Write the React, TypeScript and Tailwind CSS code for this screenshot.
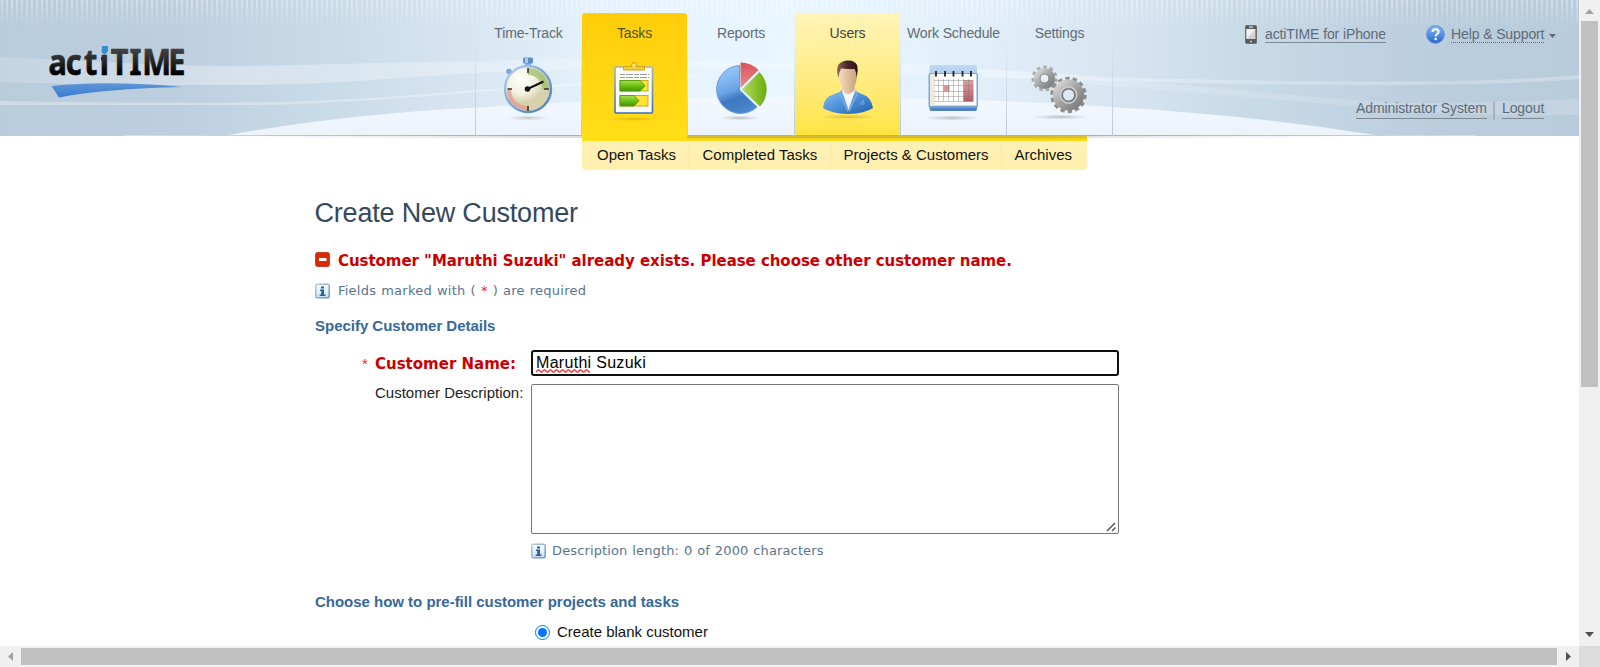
import React from "react";

const tabs = ["Time-Track", "Tasks", "Reports", "Users", "Work Schedule", "Settings"];

function HeaderBackdrop() {
  return (
    <svg className="absolute inset-0" width="1579" height="140" viewBox="0 0 1579 140">
      <defs>
        <linearGradient id="sky">
          <stop offset="0" stopColor="#b9ccdc" />
          <stop offset="0.11" stopColor="#bdcfdf" />
          <stop offset="0.15" stopColor="#c2d3e3" />
          <stop offset="0.22" stopColor="#cbdce9" />
          <stop offset="0.29" stopColor="#d7e5f1" />
          <stop offset="0.38" stopColor="#e5f2fc" />
          <stop offset="0.5" stopColor="#eaf6ff" />
          <stop offset="0.62" stopColor="#e2effa" />
          <stop offset="0.71" stopColor="#d7e5f1" />
          <stop offset="0.78" stopColor="#cadbe8" />
          <stop offset="0.85" stopColor="#c2d3e3" />
          <stop offset="0.92" stopColor="#bacddc" />
          <stop offset="1" stopColor="#b9ccdc" />
        </linearGradient>
        <linearGradient id="fade" x1="0" y1="0" x2="0" y2="1">
          <stop offset="0" stopColor="#fff" stopOpacity="0.34" />
          <stop offset="1" stopColor="#fff" stopOpacity="0" />
        </linearGradient>
        <pattern id="stripes" width="5" height="27" patternUnits="userSpaceOnUse">
          <rect x="1" width="2" height="27" fill="url(#fade)" />
        </pattern>
        <linearGradient id="band">
          <stop offset="0" stopColor="#fff" stopOpacity="0.16" />
          <stop offset="0.4" stopColor="#fff" stopOpacity="0.34" />
          <stop offset="1" stopColor="#fff" stopOpacity="0.2" />
        </linearGradient>
        <linearGradient id="hill" x1="0" y1="0" x2="0" y2="1">
          <stop offset="0" stopColor="#f2f8ff" />
          <stop offset="1" stopColor="#edf3fb" />
        </linearGradient>
        <linearGradient id="line">
          <stop offset="0" stopColor="#dfe8f0" stopOpacity="0.6" />
          <stop offset="0.12" stopColor="#b5c6d5" />
          <stop offset="0.3" stopColor="#9fb1c2" />
          <stop offset="0.7" stopColor="#9fb1c2" />
          <stop offset="0.88" stopColor="#b5c6d5" />
          <stop offset="1" stopColor="#dfe8f0" stopOpacity="0.6" />
        </linearGradient>
        <linearGradient id="shade">
          <stop offset="0" stopColor="#999" stopOpacity="0" />
          <stop offset="0.3" stopColor="#998f8a" stopOpacity="0.3" />
          <stop offset="0.7" stopColor="#998f8a" stopOpacity="0.3" />
          <stop offset="1" stopColor="#999" stopOpacity="0" />
        </linearGradient>
      </defs>
      <rect width="1579" height="136" fill="url(#sky)" />
      <rect width="1579" height="27" fill="url(#stripes)" />
      <path d="M0 57C90 61 170 66 230 66C320 65 400 62 475 61L600 58L600 68L475 73C390 78 320 86 210 85C130 85 60 84 0 82Z" fill="url(#band)" />
      <path d="M0 101Q250 105 330 100Q400 97 475 90Q600 82 700 74L700 76Q600 84 475 92Q380 101 270 105L0 105Z" fill="#fff" opacity="0.3" />
      <path d="M690 62Q900 62 1110 77Q1440 87 1579 75L1579 79Q1440 90 1110 81Q900 76 690 66Z" fill="#fff" opacity="0.25" />
      <path d="M850 58Q1000 70 1110 79Q1300 96 1400 103Q1480 103 1579 99L1579 115Q1480 117 1400 110Q1200 93 1110 86Q950 74 850 58Z" fill="#fff" opacity="0.15" />
      <path d="M228 135Q345 114 480 107.500Q640 97 790 97Q990 98 1110 107Q1250 115 1375 135Z" fill="url(#hill)" />
      <rect x="125" y="135" width="1350" height="1" fill="url(#line)" />
      <rect x="230" y="136" width="1130" height="2" fill="url(#shade)" />
    </svg>
  );
}

function Logo() {
  return (
    <svg className="overflow-visible" width="150" height="64" viewBox="44 40 150 64">
      <defs>
        <linearGradient id="ink" x1="0" y1="0" x2="0" y2="1">
          <stop offset="0" stopColor="#454545" />
          <stop offset="0.5" stopColor="#222" />
          <stop offset="0.9" stopColor="#000" />
        </linearGradient>
        <pattern id="logoInk" patternUnits="userSpaceOnUse" x="0" y="0" width="300" height="120">
          <rect y="48" width="300" height="29" fill="url(#ink)" />
          <rect x="116" y="40" width="12.500" height="13.500" fill="#2f8fcf" />
        </pattern>
        <linearGradient id="swoosh" x1="0" y1="0" x2="0" y2="1">
          <stop offset="0" stopColor="#5f96d4" />
          <stop offset="1" stopColor="#377bd2" />
        </linearGradient>
      </defs>
      <text
        transform="scale(.85 1)"
        x="57 77.500 98.800 117.500 130.200 152.500 167.500 198"
        y="75"
        fill="url(#logoInk)"
        stroke="url(#logoInk)"
        strokeWidth="0.700"
        className="font-['Noto_Sans',sans-serif] text-[36px] font-bold"
      >
        actiTIME
      </text>
      <rect x="102" y="46" width="6" height="5.500" fill="#2f8fcf" />
      <path d="M101 57h4v3.500h-4Z" fill="#2c2c2c" />
      <path d="M51.500 86Q108 80 183 87Q105 88.500 59 97.500Q56 93 51.500 86Z" fill="url(#swoosh)" />
    </svg>
  );
}

function Stopwatch() {
  return (
    <svg width="60" height="66" viewBox="0 0 60 66">
      <defs>
        <radialGradient id="dial" cx="0.35" cy="0.3">
          <stop offset="0" stopColor="#fff" />
          <stop offset="0.6" stopColor="#f3f2e2" />
          <stop offset="1" stopColor="#d5d2ac" />
        </radialGradient>
        <linearGradient id="rim" x1="0" x2="1" y1="0" y2="1">
          <stop offset="0" stopColor="#b9d2f0" />
          <stop offset="1" stopColor="#4478c4" />
        </linearGradient>
        <radialGradient id="ground"><stop offset="0" stopColor="#555" stopOpacity=".3" /><stop offset="1" stopColor="#777" stopOpacity="0" /></radialGradient>
      </defs>
      <ellipse cx="29" cy="62" rx="21" ry="2.500" fill="url(#ground)" />
      <rect x="26" y="4" width="6" height="7" fill="#7faee3" />
      <rect x="24" y="1.500" width="10" height="6" rx="1.500" fill="#5d8cc9" />
      <rect x="26" y="2" width="3" height="5" fill="#a9c9ee" />
      <circle cx="10" cy="15.500" r="2.800" fill="#7aa5dc" />
      <circle cx="29" cy="33" r="23" fill="url(#dial)" stroke="url(#rim)" strokeWidth="2.400" />
      <path d="M29 12A21 21 0 0 1 50 33L43 33A14 14 0 0 0 29 19Z" fill="#9cbf6a" opacity=".75" />
      <path d="M8 34A21 21 0 0 0 29 54.500L29 50A17 16 0 0 1 12 34Z" fill="#e39a8b" opacity=".75" />
      <path d="M29 12v5M29 50v5M8.500 33h4.500M45 33h5" stroke="#333" strokeWidth="1.600" />
      <path d="M28.500 33L44.500 25.500" stroke="#111" strokeWidth="2" />
      <circle cx="28.500" cy="33" r="2.800" fill="#151515" />
    </svg>
  );
}

function Clipboard() {
  return (
    <svg width="60" height="66" viewBox="0 0 60 66">
      <defs>
        <linearGradient id="leaf" x1="0" x2="0" y1="0" y2="1"><stop offset="0" stopColor="#a9df46" /><stop offset=".5" stopColor="#6fc119" /><stop offset="1" stopColor="#3f9000" /></linearGradient>
        <linearGradient id="paper" x1="0" x2="0" y1="0" y2="1"><stop offset="0" stopColor="#a9b7a5" /><stop offset="1" stopColor="#3770b8" /></linearGradient>
        <radialGradient id="groundY"><stop offset="0" stopColor="#b38600" stopOpacity=".4" /><stop offset="1" stopColor="#b38600" stopOpacity="0" /></radialGradient>
      </defs>
      <ellipse cx="29" cy="63" rx="26" ry="2" fill="url(#groundY)" />
      <rect x="10" y="11" width="37.500" height="46" rx="1" fill="#fbfbf8" stroke="url(#paper)" strokeWidth="1.600" />
      <path d="M18.500 10.500h8V8.500q0-2 2.500-2t2.500 2v2h8v3.500h-21Z" fill="#f5cf3d" stroke="#cda51b" />
      <circle cx="29" cy="9.500" r="1.200" fill="#fff2a4" />
      <path d="M15 18.500h29M15 21.500h29" stroke="#999" strokeDasharray="5 1 7 1" />
      <rect x="15" y="24.500" width="28" height="10.500" fill="#ffe233" stroke="#c5ad20" />
      <rect x="15" y="39.500" width="28" height="10.500" fill="#ffe233" stroke="#c5ad20" />
      <path d="M15 24.500h20l5 5.250l-5 5.250h-20Z" fill="url(#leaf)" stroke="#5e9e14" />
      <path d="M15 39.500h14l5 5.250l-5 5.250h-14Z" fill="url(#leaf)" stroke="#5e9e14" />
    </svg>
  );
}

function Pie() {
  return (
    <svg width="60" height="66" viewBox="0 0 60 66">
      <defs>
        <linearGradient id="blue" x1=".3" x2=".6" y1="0" y2="1"><stop offset="0" stopColor="#9bcaf9" /><stop offset=".5" stopColor="#6aa4e6" /><stop offset=".68" stopColor="#3d77bf" /><stop offset="1" stopColor="#4a88d0" /></linearGradient>
        <linearGradient id="red" x1="0" x2="0" y1="0" y2="1"><stop offset="0" stopColor="#d9525a" /><stop offset="1" stopColor="#e68d8e" /></linearGradient>
        <linearGradient id="green" x1="0" x2="1"><stop offset="0" stopColor="#b3dc5d" /><stop offset="1" stopColor="#69ac0d" /></linearGradient>
        <radialGradient id="groundP"><stop offset="0" stopColor="#555" stopOpacity=".35" /><stop offset="1" stopColor="#777" stopOpacity="0" /></radialGradient>
      </defs>
      <ellipse cx="29" cy="62" rx="20" ry="2.500" fill="url(#groundP)" />
      <path d="M28.500 34V9.500A24 24 0 1 0 46 51Z" fill="url(#blue)" stroke="#6898d6" />
      <path d="M29.500 32V6.500A25 25 0 0 1 47.500 14Z" fill="url(#red)" />
      <path d="M31 33.500L48.500 16A25 25 0 0 1 49 50.500Z" fill="url(#green)" />
    </svg>
  );
}

function Person() {
  return (
    <svg width="60" height="66" viewBox="0 0 60 66">
      <defs>
        <linearGradient id="coat" x1="0" x2="1" y1="0" y2="1"><stop offset="0" stopColor="#8cc0f0" /><stop offset=".5" stopColor="#4c90d8" /><stop offset="1" stopColor="#235da5" /></linearGradient>
        <linearGradient id="skin"><stop offset="0" stopColor="#f3dcc0" /><stop offset="1" stopColor="#caa079" /></linearGradient>
        <linearGradient id="hair"><stop offset="0" stopColor="#8a675e" /><stop offset=".5" stopColor="#4c2326" /><stop offset="1" stopColor="#2e1214" /></linearGradient>
      </defs>
      <ellipse cx="30" cy="61" rx="29" ry="2.500" fill="url(#groundY)" />
      <path d="M5 52Q6 41 15 38.500L23 35.500Q30 32 38 35.500L45 38.500Q53 41 55 52Q47 57.500 30 58Q13 57.500 5 52Z" fill="url(#coat)" />
      <path d="M23.500 34L30.500 54L37.500 34Z" fill="#f2f5f9" />
      <path d="M23.500 34.500L22.500 39L30 55M37.500 34.500L38.500 39L31 55" fill="none" stroke="#71a9e4" strokeWidth="1.800" />
      <path d="M21.500 12Q20 25 24 30V34Q30 42 36.500 34V30Q40 24 38.500 12Q30 4 21.500 12Z" fill="url(#skin)" />
      <path d="M20.500 22Q17.500 12 21 8Q25 4 31 4.500Q36.500 4.500 39 9Q40.500 14 38.500 22Q38.500 16 36.500 13Q30 13 23 12.500Q21 16 20.500 22Z" fill="url(#hair)" />
      <path d="M42 48l3-4l1 4Z" fill="none" stroke="#75aae2" />
    </svg>
  );
}

function Schedule() {
  return (
    <svg width="60" height="66" viewBox="0 0 60 66">
      <defs>
        <linearGradient id="calTop" x1="0" x2="0" y1="0" y2="1"><stop offset="0" stopColor="#c0d8f4" /><stop offset=".6" stopColor="#8fb6e5" /><stop offset="1" stopColor="#4c7fc0" /></linearGradient>
        <linearGradient id="week" x1="0" x2="0" y1="0" y2="1"><stop offset="0" stopColor="#dda2a0" /><stop offset="1" stopColor="#b95a62" /></linearGradient>
      </defs>
      <ellipse cx="28" cy="62" rx="29" ry="2.500" fill="url(#groundP)" />
      <rect x="5.500" y="9" width="47.500" height="46" rx="2" fill="url(#calTop)" />
      <rect x="4.500" y="17" width="49.500" height="34.500" rx="1.500" fill="#7fa7d8" />
      <rect x="6" y="18" width="46.500" height="31.500" fill="#fdfdfd" />
      <rect x="6" y="18" width="5" height="31.500" fill="#eeebdd" />
      <rect x="19.500" y="29.500" width="6" height="6" fill="#d89394" />
      <rect x="39.500" y="24" width="10" height="21.500" fill="url(#week)" />
      <path d="M10 24.500h39M10 29.500h39M10 35.500h39M10 40.500h39M10 45.500h39M14.500 23v22M19.500 23v22M24.500 23v22M29.500 23v22M34.500 23v22M39.500 23v22M44.500 23v22" stroke="#777" strokeOpacity=".5" strokeWidth=".8" />
      <path d="M12 15v5.500M21 15v5.500M29.500 15v5.500M38.500 15v5.500M47 15v5.500" stroke="#1d2229" strokeWidth="1.800" />
    </svg>
  );
}

function Gears() {
  return (
    <svg width="60" height="66" viewBox="0 0 60 66">
      <defs>
        <linearGradient id="steel" x1="0" x2="1" y1="0" y2="1"><stop offset="0" stopColor="#d5d5d5" /><stop offset=".5" stopColor="#a2a2a2" /><stop offset="1" stopColor="#7c7c7c" /></linearGradient>
      </defs>
      <ellipse cx="30" cy="61" rx="29" ry="2.500" fill="url(#groundP)" />
      <circle cx="14.500" cy="22.500" r="11.500" fill="none" stroke="#a9a9a9" strokeWidth="3" strokeDasharray="3.600 2.968" />
      <circle cx="14.500" cy="22.500" r="7.400" fill="none" stroke="url(#steel)" strokeWidth="6.400" />
      <circle cx="14.500" cy="22.500" r="4.500" fill="none" stroke="#888" strokeWidth="1" />
      <circle cx="38.500" cy="39" r="16.200" fill="none" stroke="#8c8c8c" strokeWidth="4" strokeDasharray="4.200 3.070" />
      <circle cx="38.500" cy="39" r="11.200" fill="none" stroke="url(#steel)" strokeWidth="9" />
      <circle cx="38.500" cy="39" r="8.200" fill="none" stroke="#cdcdcd" strokeWidth="1.500" />
      <circle cx="38.500" cy="39" r="6.300" fill="none" stroke="#777" strokeWidth="1.500" />
    </svg>
  );
}

const icons = [Stopwatch, Clipboard, Pie, Person, Schedule, Gears];

const tabStyles = [
  "w-[105px] h-[136px] pt-[24px] text-[#5f6b76]",
  "w-[105px] mt-[13px] h-[128px] pt-[11px] rounded-t-[3px] bg-linear-to-b from-[#ffcd0a] to-[#ffde18] text-[#4e5327]",
  "w-[106px] h-[136px] pt-[24px] text-[#5f6b76]",
  "w-[105px] mt-[13px] h-[122px] pt-[11px] bg-linear-to-b from-[#fff4b8] to-[#ffe43f] text-[#3f4446]",
  "w-[105px] h-[136px] pt-[24px] text-[#5f6b76]",
  "w-[105px] h-[136px] pt-[24px] text-[#5f6b76]",
];

function Tab({ label, index }: { label: string; index: number }) {
  const Icon = icons[index];
  return (
    <div className={`relative flex shrink-0 flex-col items-center ${tabStyles[index]}`}>
      <span className="h-[18px] text-[14px] leading-[18px] tracking-[-0.13px] whitespace-nowrap">{label}</span>
      <div className="mt-[14px]">
        <Icon />
      </div>
    </div>
  );
}

function Separator() {
  return <div className="h-[136px] w-px shrink-0 bg-linear-to-b from-transparent from-25% to-[#b9c9e4]" />;
}

function Header() {
  return (
    <header className="relative flex h-[136px] w-[1579px] shrink-0">
      <HeaderBackdrop />
      <div className="relative w-[475px] shrink-0 pt-[40px] pl-[44px]">
        <Logo />
      </div>
      <nav className="relative flex shrink-0">
        <Separator />
        {tabs.map((t, i) => (
          <React.Fragment key={t}>
            <Tab label={t} index={i} />
            <Separator />
          </React.Fragment>
        ))}
      </nav>
      <div className="relative flex flex-1 flex-col items-end pr-[35px] text-[14px] leading-[16px] tracking-[-0.11px] text-[#5f6b76]">
        <div className="-mr-[12px] flex pt-[25px]">
          <svg width="12" height="19" viewBox="0 0 12 19">
            <rect x=".5" y=".5" width="11" height="18" rx="1" fill="#5a5a5a" stroke="#707070" />
            <rect x="1.500" y="4" width="9" height="10" fill="#d2d2d2" />
            <path d="M1.500 4h9L1.500 14Z" fill="#f0f0f0" />
            <path d="M4 2h4M5 16.500h2" stroke="#ccc" strokeWidth="1.500" />
          </svg>
          <span className="mt-px ml-[8px] h-[17px] w-[121px] border-b border-[#7c8791] whitespace-nowrap">actiTIME for iPhone</span>
          <svg className="ml-[40px]" width="19" height="19" viewBox="0 0 19 19">
            <defs><linearGradient id="help" x1="0" x2="0" y1="0" y2="1"><stop offset="0" stopColor="#86b7f8" /><stop offset="1" stopColor="#2867d4" /></linearGradient></defs>
            <circle cx="9.500" cy="9.500" r="8.800" fill="url(#help)" stroke="#5d8bd2" />
            <path d="M6.500 7Q6.500 4.200 9.600 4.200Q12.600 4.200 12.600 6.700Q12.600 8.300 10.900 9.200Q9.700 9.900 9.700 11.500" fill="none" stroke="#fff" strokeWidth="2" />
            <circle cx="9.700" cy="14" r="1.300" fill="#fff" />
          </svg>
          <span className="mt-px ml-[6px] h-[17px] w-[93px] border-b border-dotted border-[#5f6b76] whitespace-nowrap">Help &amp; Support</span>
          <svg className="mt-[9px] ml-[5px]" width="7" height="4"><path d="M0 0h7L3.500 4Z" fill="#5f6b76" /></svg>
        </div>
        <div className="mt-[56px] flex">
          <span className="h-[19px] w-[131px] border-b border-[#7c8791] whitespace-nowrap">Administrator System</span>
          <span className="mt-[2px] ml-[6px] h-[18px] w-[2px] bg-[#aeb1b9]" />
          <span className="ml-[7px] h-[19px] w-[42px] border-b border-[#7c8791] whitespace-nowrap">Logout</span>
        </div>
      </div>
    </header>
  );
}

function SubMenu() {
  return (
    <div className="ml-[582px] h-[34px] w-[505px] shrink-0 overflow-hidden rounded-b-[4px]">
      <div className="flex h-[5px]">
        <div className="w-[105px] bg-[#ffde18]" />
        <div className="flex-1 bg-linear-to-b from-[#ecca0d] to-[#fbdb1b]" />
      </div>
      <div className="flex h-[29px] bg-linear-to-b from-[#fff1b6] to-[#fff0ae] text-[15px] leading-[28px] whitespace-nowrap text-[#111]">
        <span className="w-[108px] border-r border-[#f8e8a8] pl-[15px]">Open Tasks</span>
        <span className="w-[141px] border-r border-[#f8e8a8] pl-[12.5px]">Completed Tasks</span>
        <span className="w-[171px] border-r border-[#f8e8a8] pl-[12.5px]">Projects &amp; Customers</span>
        <span className="pl-[12.5px]">Archives</span>
      </div>
    </div>
  );
}

function Form() {
  return (
    <main className="flex flex-1 flex-col pl-[315px] whitespace-nowrap">
      <h1 className="mt-[25px] -ml-[0.5px] h-[36px] text-[27px] leading-[36px] tracking-[-0.2px] text-[#34495e]">Create New Customer</h1>
      <div className="mt-[21px] flex h-[19px] font-['DejaVu_Sans',sans-serif] text-[15px] leading-[19px] font-bold text-[#cc0000]">
        <svg width="15" height="15" viewBox="0 0 15 15" className="shrink-0">
          <rect x=".5" y=".5" width="14" height="14" rx="2" fill="#d92905" stroke="#c7402a" />
          <rect x="4" y="6" width="7.500" height="3" fill="#fff" />
        </svg>
        <p className="ml-[8px] tracking-[-0.045px]">Customer "Maruthi Suzuki" already exists. Please choose other customer name.</p>
      </div>
      <div className="mt-[10px] flex h-[20px] items-center font-['DejaVu_Sans',sans-serif] text-[13px] text-[#5a7490]">
        <InfoIcon />
        <p className="ml-[8px] tracking-[0.23px] [word-spacing:0.7px]">Fields marked with ( <span className="text-[#ff2020]">*</span> ) are required</p>
      </div>
      <h2 className="mt-[15px] h-[20px] text-[15px] leading-[20px] font-bold tracking-[-0.02px] text-[#36699a]">Specify Customer Details</h2>
      <div className="mt-[14px] flex h-[26px]">
        <div className="flex w-[216px] items-center pt-[2px] pl-[47px] font-['DejaVu_Sans',sans-serif] text-[15px] font-bold text-[#cc0000]">
          <span className="w-[13px] font-['Liberation_Sans',sans-serif] font-normal text-[#ff2020]">*</span>
          <span>Customer Name:</span>
        </div>
        <div className="flex h-[26px] w-[588px] rounded-[3px] border-2 border-[#101010] pl-[3px] text-[16px] leading-[21px] tracking-[0.3px] text-black">
          <span className="relative">
            Maruthi
            <svg className="absolute top-[17px] left-0" width="55" height="4" viewBox="0 0 55 4">
              <path d="M0 3l2-2l1 0l2 2l1 0l2-2l1 0l2 2l1 0l2-2l1 0l2 2l1 0l2-2l1 0l2 2l1 0l2-2l1 0l2 2l1 0l2-2l1 0l2 2l1 0l2-2l1 0l2 2l1 0l2-2l1 0l2 2l1 0l2-2l1 0l2 2l1 0" fill="none" stroke="#f33" strokeWidth="1.300" />
            </svg>
          </span>
          <span className="whitespace-pre"> Suzuki</span>
        </div>
      </div>
      <div className="mt-[8px] flex h-[150px]">
        <div className="w-[216px] pl-[60px] text-[15px] leading-[17px] text-[#222]">Customer Description:</div>
        <div className="flex h-[150px] w-[588px] items-end justify-end rounded-[2px] border border-[#767676]">
          <svg width="13" height="13" viewBox="0 0 13 13">
            <path d="M2 11L10 3M7 11L10.500 7.500" stroke="#555" strokeWidth="1.500" />
          </svg>
        </div>
      </div>
      <div className="mt-[7px] ml-[216px] flex h-[20px] items-center font-['DejaVu_Sans',sans-serif] text-[13px] text-[#5a7490]">
        <InfoIcon />
        <p className="ml-[6px] tracking-[0.13px] [word-spacing:0.6px]">Description length: 0 of 2000 characters</p>
      </div>
      <h2 className="mt-[31px] h-[20px] text-[15px] leading-[20px] font-bold tracking-[-0.02px] text-[#36699a]">Choose how to pre-fill customer projects and tasks</h2>
      <div className="mt-[10px] ml-[220px] flex h-[20px] items-center text-[15px] text-[#111]">
        <span className="flex size-[15px] items-center justify-center rounded-full border border-[#0075ff]">
          <span className="size-[9px] rounded-full bg-[#0075ff]" />
        </span>
        <span className="ml-[7px]">Create blank customer</span>
      </div>
    </main>
  );
}

function InfoIcon() {
  return (
    <svg width="15" height="16" viewBox="0 0 15 16" className="shrink-0">
      <defs>
        <linearGradient id="info" x1="0" x2="0" y1="0" y2="1"><stop offset="0" stopColor="#fff" /><stop offset="1" stopColor="#c4e1f8" /></linearGradient>
        <linearGradient id="infoEdge" x1="0" x2="1" y1="0" y2="1"><stop offset="0" stopColor="#b4cadd" /><stop offset="1" stopColor="#6f94b5" /></linearGradient>
      </defs>
      <rect x=".8" y="1.300" width="13.400" height="13.400" rx="1.500" fill="url(#info)" stroke="url(#infoEdge)" strokeWidth="1.500" />
      <path d="M6 3.500h3v2H6ZM5 6.500h4v5h1.500V13H4.700v-1.500h1.500V8H5Z" fill="#2a5f98" />
    </svg>
  );
}

export default function App() {
  return (
    <div className="flex h-[667px] w-[1600px] flex-col overflow-hidden bg-white font-['Liberation_Sans',Arial,sans-serif]">
      <div className="flex h-[646px]">
        <div className="flex w-[1579px] flex-col overflow-hidden">
          <Header />
          <SubMenu />
          <Form />
        </div>
        <div className="flex w-[21px] flex-col items-center bg-[#f0f0f0]">
          <svg width="21" height="21"><path d="M6 14h9L10.500 9Z" fill="#a3a3a3" /></svg>
          <div className="-ml-px h-[366px] w-[17px] bg-[#c1c1c1]" />
          <svg className="mt-auto" width="21" height="21"><path d="M6 7h9L10.500 12Z" fill="#505050" /></svg>
        </div>
      </div>
      <div className="flex h-[21px] items-center bg-[#f0f0f0]">
        <svg width="21" height="21"><path d="M13 6v9L8 10.500Z" fill="#a3a3a3" /></svg>
        <div className="-mt-px h-[17px] w-[1536px] bg-[#c1c1c1]" />
        <svg width="22" height="21"><path d="M9 6v9l5-4.500Z" fill="#505050" /></svg>
        <div className="h-[21px] w-[21px] bg-[#dcdcdc]" />
      </div>
    </div>
  );
}
